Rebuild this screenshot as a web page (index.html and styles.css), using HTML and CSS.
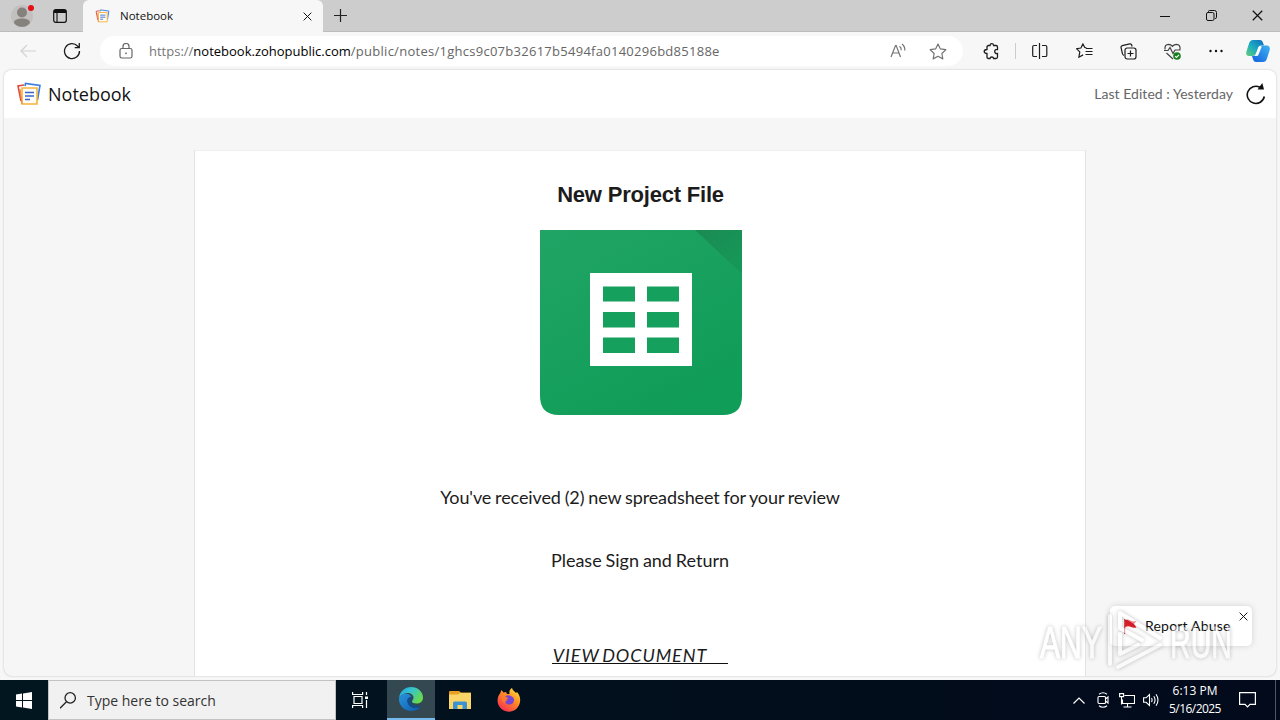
FILE: index.html
```html
<!DOCTYPE html>
<html lang="en">
<head>
    <meta charset="UTF-8">
    <meta name="viewport" content="width=device-width, initial-scale=1.0">
    <title>Notebook</title>
    <link rel="stylesheet" href="styles.css">
</head>
<body>
    <svg class="defs" width="0" height="0">
        <symbol id="notebook" viewBox="0 0 24 24">
            <path d="M4 19 1 4l6-1" fill="none" stroke="#e0483e" stroke-width="1.6"/>
            <path d="M8 4 8.500 1.500 23 3.500 20.500 18" fill="none" stroke="#3b7ddd" stroke-width="1.600"/>
            <path d="M5 6h15v16H5z" fill="#fffdf5" stroke="#f3b43c" stroke-width="1.600"/>
            <path d="M3 7l2 15" stroke="#f08a3c" stroke-width="1.200"/>
            <path d="M8 10.500h9M8 14h9M8 17.500h5" stroke="#3566d0" stroke-width="1.500"/>
        </symbol>
        <symbol id="close" viewBox="0 0 10 10">
            <path d="M.7.7l8.600 8.600M9.300.7.7 9.300" fill="none" stroke="currentColor" stroke-width="1.100"/>
        </symbol>
    </svg>

    <div class="tab-strip">
        <div class="profile">
            <svg width="26" height="26" viewBox="0 0 26 26">
                <circle cx="12" cy="13" r="11" fill="#c2c0be"/>
                <circle cx="12" cy="9.500" r="5" fill="#85817d"/>
                <path d="M4 20c0-3 3-4.500 8-4.500s8 1.500 8 4.500c-2 3-5 3.800-8 3.800S6 23 4 20z" fill="#85817d"/>
                <circle cx="21" cy="5" r="3" fill="#e3101a"/>
            </svg>
        </div>
        <div class="tab-actions">
            <svg width="14" height="14" viewBox="0 0 14 14" fill="none" stroke="#111">
                <rect x=".7" y=".7" width="12.600" height="12.600" rx="2" stroke-width="1.200"/>
                <path d="M1 2.500h12" stroke-width="3"/>
                <path d="M4 3v10" stroke-width="1.100"/>
            </svg>
        </div>
        <div class="tab">
            <svg width="15" height="14"><use href="#notebook"/></svg>
            <span class="tab-title">Notebook</span>
            <svg class="tab-close" width="9" height="9"><use href="#close"/></svg>
        </div>
        <div class="new-tab">
            <svg width="14" height="14" viewBox="0 0 14 14"><path d="M6.500 0v13M0 6.500h13" stroke="#222" stroke-width="1.200"/></svg>
        </div>
        <div class="window-buttons">
            <div><svg width="10" height="10" viewBox="0 0 10 10"><path d="M0 5.500h10" stroke="#111"/></svg></div>
            <div><svg width="11" height="11" viewBox="0 0 11 11" fill="none" stroke="#111"><rect x=".5" y="2.500" width="7.500" height="8" rx="1.500"/><path d="M2.500 2V1.500q0-1 1-1H8.500q2 0 2 2v5q0 1-1.500 1"/></svg></div>
            <div><svg width="11" height="11"><use href="#close"/></svg></div>
        </div>
    </div>

    <div class="toolbar">
        <div class="tool disabled">
            <svg width="16" height="14" viewBox="0 0 16 14" fill="none" stroke="#d2d2d2" stroke-width="1.200"><path d="M16 7H1M7 1 1 7l6 6"/></svg>
        </div>
        <div class="tool">
            <svg width="18" height="18" viewBox="0 0 18 18" fill="none" stroke="#1d1d1d" stroke-width="1.300"><path d="M16.500 9A7.500 7.500 0 1 1 14.500 4L16 5.500M16.300 1v4.700h-4.600"/></svg>
        </div>
        <div class="address">
            <svg class="lock" width="14" height="17" viewBox="0 0 14 17" fill="none" stroke="#666" stroke-width="1.200"><rect x="1" y="5.500" width="12" height="9.500" rx="1.800"/><path d="M4 5.500V3.500a3 3 0 0 1 6 0v2"/><circle cx="7" cy="10.300" r=".9" fill="#666" stroke="none"/></svg>
            <div class="url">https://<b>notebook.zohopublic.com</b><span class="path">/public/notes/1ghcs9c07b32617b5494fa0140296bd85188e</span></div>
            <svg class="read" width="17" height="16" viewBox="0 0 17 16" fill="none" stroke="#747474" stroke-width="1.200"><path d="M1 14 5.500 2.500h.7L10.500 14M2.700 10h6.200M9.500 3.200q2 1.500 1.700 4M12 1q3.200 2.500 2.800 6.500"/></svg>
            <svg class="star" width="18" height="17" viewBox="0 0 18 17" fill="none" stroke="#747474" stroke-width="1.200"><path d="M9 1l2.400 4.900 5.400.8-3.900 3.800.9 5.400L9 13.300l-4.800 2.600.9-5.400L1.200 6.700l5.400-.8z" stroke-linejoin="round"/></svg>
        </div>
        <div class="tool">
            <svg width="16" height="17" viewBox="0 0 16 17" fill="none" stroke="#1d1d1d" stroke-width="1.300"><path d="M5.500 2.500H7q.2-1.800 1.800-1.800t1.800 1.800H13q1.500 0 1.500 1.500v2.500q-2.800-.3-2.800 2t2.800 2V14q0 1.500-1.500 1.500h-2.400q-.2-1.500-1.800-1.500T7 15.500H5.500Q4 15.500 4 14v-3.500Q1.200 10.300 1.200 8.500T4 6.500V4q0-1.500 1.500-1.500z"/></svg>
        </div>
        <div class="separator"></div>
        <div class="tool">
            <svg width="16" height="16" viewBox="0 0 16 16" fill="none" stroke="#1d1d1d" stroke-width="1.200"><path d="M7.500 0v16M5 2.500H2q-1.300 0-1.300 1.300v8.400q0 1.300 1.300 1.300h3M10 2.500h3.500q1.300 0 1.300 1.300v8.400q0 1.300-1.300 1.300H10"/></svg>
        </div>
        <div class="tool">
            <svg width="17" height="16" viewBox="0 0 17 16" fill="none" stroke="#1d1d1d" stroke-width="1.200"><path d="M10.500 4.800 8.800 4.500 6.900 1 4.900 5 .6 5.700l3.200 3.200-.9 5.300 4.200-2.300M10 5.500h6.500M9.500 8.500h7M9.500 11.500h7"/></svg>
        </div>
        <div class="tool">
            <svg width="17" height="17" viewBox="0 0 17 17" fill="none" stroke="#1d1d1d" stroke-width="1.200"><path d="M4 12.300Q2.700 12 2.400 10.500L1 4.500Q.8 3 2.200 2.600L9.800.9Q11.300.7 11.700 2l.4 1.500"/><rect x="5" y="5" width="11" height="11" rx="2.200"/><path d="M10.500 7.500v6M7.500 10.500h6"/></svg>
        </div>
        <div class="tool">
            <svg width="17" height="17" viewBox="0 0 17 17" fill="none" stroke="#444" stroke-width="1.200"><path d="M1 6.500Q.5 1.500 4.500 1.300q2.500 0 4 2 1.500-2 4-2Q16.500 1.500 16 6.500M2.500 10 9 16M0 7.500h4L6 4.500l3 6 2-3.500h5.500"/><circle cx="13" cy="13" r="3.800" fill="#16801c" stroke="none"/><path d="M11.200 13.200l1.300 1.200L15 11.800" stroke="#fff"/></svg>
        </div>
        <div class="tool">
            <svg width="14" height="4" viewBox="0 0 14 4" fill="#111"><circle cx="1.500" cy="2" r="1.200"/><circle cx="7" cy="2" r="1.200"/><circle cx="12.500" cy="2" r="1.200"/></svg>
        </div>
        <div class="copilot">
            <svg width="24" height="22" viewBox="0 0 24 22">
                <defs>
                    <linearGradient id="cop-a" x1="0" y1="1" x2="1" y2="0"><stop offset="0" stop-color="#63cf78"/><stop offset=".5" stop-color="#18a9c4"/><stop offset="1" stop-color="#1268bd"/></linearGradient>
                    <linearGradient id="cop-b" x1="1" y1="0" x2="0" y2="1"><stop offset="0" stop-color="#3fb4f0"/><stop offset="1" stop-color="#145fe0"/></linearGradient>
                </defs>
                <path d="M7 0h7q2 0 2.700 2L18 5.500h-3q-2 0-2.700 2L10 14q-.8 2-3.500 2H3Q-.5 16 .3 12L3 3.500Q4 0 7 0z" fill="url(#cop-a)"/>
                <path d="M17 22h-7q-2 0-2.700-2L6 16h3q2 0 2.700-2l2.300-6.500q.8-2 3-2h4Q24.500 6 23.700 10L21 18.500Q20 22 17 22z" fill="url(#cop-b)"/>
                <path d="M12.800 6.500h3L12 15.700H9z" fill="#fff"/>
            </svg>
        </div>
    </div>

    <div class="page">
        <div class="header">
            <svg width="24" height="24"><use href="#notebook"/></svg>
            <h1>Notebook</h1>
            <span class="edited">Last Edited : Yesterday</span>
            <svg class="reload" width="20" height="22" viewBox="0 0 20 22" fill="none"><path d="M18.300 13.500A8.600 8.600 0 1 1 14 4.300" stroke="#111" stroke-width="1.600"/><path d="M11.500 6.500 16.300 0l1.700 6.500z" fill="#111"/></svg>
        </div>
        <div class="note">
            <h2>New Project File</h2>
            <svg class="sheet" width="202" height="185" viewBox="0 0 202 185">
                <defs>
                    <linearGradient id="green" x1="0" y1="0" x2=".6" y2="1"><stop offset="0" stop-color="#21a465"/><stop offset="1" stop-color="#109d58"/></linearGradient>
                    <linearGradient id="fold" x1="0" y1="0" x2="1" y2="1"><stop offset="0" stop-color="#1b8a54"/><stop offset="1" stop-color="#159a58"/></linearGradient>
                </defs>
                <path d="M0 0h202v166q0 19-19 19H19q-19 0-19-19z" fill="url(#green)"/>
                <path d="M155 0h47v44z" fill="url(#fold)"/>
                <path d="M50 43h102v93H50z" fill="#fff"/>
                <path d="M63 56.500h32v15H63zM107 56.500h32v15h-32zM63 82h32v15.500H63zM107 82h32v15.500h-32zM63 107.500h32V123H63zM107 107.500h32V123h-32z" fill="#16a05d"/>
            </svg>
            <p class="message">You've received (2) new spreadsheet for your review</p>
            <p class="sign">Please Sign and Return</p>
            <p class="view"><u>VIEW DOCUMENT</u></p>
        </div>
        <div class="report">
            <svg width="13" height="15" viewBox="0 0 13 15"><path d="M.7 0v15" stroke="#c93030"/><path d="M1 1q3-1 5.500.5T12.500 2L10 5l2.500 3.500q-3 .8-5.500-.5T1 8z" fill="#df2029"/></svg>
            <span>Report Abuse</span>
            <svg class="report-close" width="9" height="9"><use href="#close"/></svg>
        </div>
    </div>

    <div class="taskbar">
        <div class="start">
            <svg width="16" height="17" viewBox="0 0 16 17" fill="#fff"><path d="M0 2.500 6 1.600V8H0zM7 1.500 16 0v8H7zM0 9h6v6.400l-6-.9zM7 9h9v8l-9-1.500z"/></svg>
        </div>
        <div class="search">
            <svg width="17" height="17" viewBox="0 0 17 17" fill="none" stroke="#222" stroke-width="1.300"><circle cx="10.200" cy="5.900" r="5.200"/><path d="M6.500 9.700 0 16.200"/></svg>
            <span>Type here to search</span>
        </div>
        <div class="task task-view">
            <svg width="17" height="16" viewBox="0 0 17 16" fill="none" stroke="#fff" stroke-width="1.200"><path d="M.6 0v2.500h10V0M.6 16v-2.500h10V16M2 4.500h8v7H2zM14.500 0v3M14.500 8v8"/><path d="M13 4.500h3v2.500h-3z" fill="#fff" stroke="none"/></svg>
        </div>
        <div class="task active">
            <svg width="24" height="24" viewBox="0 0 24 24">
                <defs>
                    <linearGradient id="edge-a" x1="0" y1="0" x2="1" y2=".5"><stop offset="0" stop-color="#279ee0"/><stop offset=".5" stop-color="#35c5cf"/><stop offset="1" stop-color="#67d94f"/></linearGradient>
                    <linearGradient id="edge-b" x1="0" y1="0" x2="1" y2="1"><stop offset="0" stop-color="#2795df"/><stop offset="1" stop-color="#105bab"/></linearGradient>
                </defs>
                <path d="M0 11C1 4 6 0 12 0c7 0 12 5 12 10.500 0 4-3 6-6.500 6-3 0-4.500-1-4.500-2s1.500-1.500 1.500-4C14.500 7 10 5 6 6.500 3 7.500 1 9 0 11z" fill="url(#edge-a)"/>
                <path d="M0 11C2 7 6 6 9 7c2 .7 3 2 3.500 3C9 10 8 12.500 8.500 15c.8 4 5 6.500 9 6 1.500-.2 3-.8 4-1.500-2 3-5.500 4.500-9.500 4.500C5 24-.8 18 0 11z" fill="url(#edge-b)"/>
                <path d="M12.500 10C9 10 8 12.500 8.500 15c.8 4 5 6.500 9 6 1.500-.2 3-.8 4-1.500l.8-1.200c-4 1.500-9.300.2-10.300-3.300-.4-2 .5-3 .5-5z" fill="#124c8c"/>
            </svg>
        </div>
        <div class="task explorer">
            <svg width="22" height="19" viewBox="0 0 22 19"><path d="M0 1q0-1 1-1h9l2 1.500h10v5H0z" fill="#e79e25"/><path d="M0 3.500h9L11 2h11v16H0z" fill="#fbd567"/><path d="M4 18v-6q0-1.500 1.500-1.500h11Q18 10.500 18 12v6h-4.500v-4h-5v4z" fill="#3d93d0"/></svg>
        </div>
        <div class="task">
            <svg width="24" height="24" viewBox="0 0 24 24">
                <defs><linearGradient id="fox" x1=".9" y1="0" x2=".2" y2="1"><stop offset="0" stop-color="#ffe83a"/><stop offset=".45" stop-color="#ff8a25"/><stop offset="1" stop-color="#f42a55"/></linearGradient></defs>
                <path d="M3 5.500 4.500 2l2 2.500L9 4l1 2h2.500C12 3 13 1 15 0c.5 2.500 2.500 3 4 5l1-1c3 3.500 3.500 7 3 10-1 6-6 9.800-11 9.800S1 20 .6 13.500C.4 10 1.300 7.500 3 5.500z" fill="url(#fox)"/>
                <path d="M8 8.500q3-2 6-.5 3.500 1.500 3 4.500-.7 3.800-4.500 4T7.500 13q1.500.5 3-.8L8 11z" fill="#7745d3"/>
                <path d="M5 8q2-1 3.500.5L11 10q0 1.500-2.500 2-1 2 .8 3.500Q6 15 5 12z" fill="#ff7a2b"/>
            </svg>
        </div>
        <div class="tray">
            <div class="tray-icon"><svg width="12" height="7" viewBox="0 0 12 7" fill="none" stroke="#fff" stroke-width="1.200"><path d="M.5 6.500 6 1l5.500 5.500"/></svg></div>
            <div class="tray-icon"><svg width="12" height="16" viewBox="0 0 12 16" fill="none" stroke="#fff" stroke-width="1.100"><rect x="1" y="4.500" width="7.500" height="7" rx="1"/><path d="M8.500 7 11 5v6L8.500 9M2 2.200q4-3 8 0M2 13.800q4 3 8 0"/></svg></div>
            <div class="tray-icon"><svg width="16" height="15" viewBox="0 0 16 15" fill="none" stroke="#fff" stroke-width="1.100"><path d="M5.500 2.500h10v8h-12v-4M8.500 10.500v3.500M4.500 14h8M.6.600h4v3h-4zM2.500 3.600v8"/></svg></div>
            <div class="tray-icon"><svg width="17" height="14" viewBox="0 0 17 14" fill="none" stroke="#fff" stroke-width="1.100"><path d="M.6 4.800h2.500L6.500 1.500v11L3.100 9.300H.6zM8.500 5q1.200 2 0 4M10.800 3.200q2.500 3.800 0 7.600M13 1.300q4 5.700 0 11.400"/></svg></div>
            <div class="clock"><span class="time">6:13 PM</span><span class="date">5/16/2025</span></div>
            <div class="notify"><svg width="17" height="16" viewBox="0 0 17 16" fill="none" stroke="#fff" stroke-width="1.200"><path d="M.6.600h15.800v11.800H11l-2.500 2.500L6 12.400H.6z"/></svg></div>
            <div class="desktop"></div>
        </div>
    </div>

    <svg class="watermark" width="200" height="70" viewBox="0 0 200 70">
        <g class="watermark-text">
            <text x="4" y="50" textLength="62" lengthAdjust="spacingAndGlyphs">ANY</text>
            <text x="134" y="50" textLength="62" lengthAdjust="spacingAndGlyphs">RUN</text>
        </g>
        <path d="M74 8v48M84 20V5l40 25M84 26v20l18-9M82 59l42-22M84 20l22 12" fill="none" stroke="#fff" stroke-width="4" stroke-linejoin="round" stroke-linecap="round"/>
    </svg>
</body>
</html>
```
FILE: styles.css
```css
* {
    box-sizing: border-box;
}
body {
    display: flex;
    flex-direction: column;
    width: 1280px;
    height: 720px;
    margin: 0;
    overflow: hidden;
    font-family: "Open Sans", "Noto Sans", sans-serif;
    background: #f7f7f8;
    color: #111;
}
svg {
    display: block;
    flex-shrink: 0;
}
.defs {
    position: absolute;
}

/* Browser tabs */
.tab-strip {
    display: flex;
    height: 32px;
    background: #cdcdcd;
    border-bottom: 1px solid #bcbcbc;
}
.profile {
    width: 44px;
    padding: 3px 0 0 10px;
}
.tab-actions {
    width: 39px;
    padding: 9px 0 0 9px;
}
.tab {
    display: flex;
    align-items: center;
    width: 240px;
    height: 32px;
    padding: 0 11px 0 12px;
    border-radius: 6px 6px 0 0;
    background: #f7f7f7;
}
.tab-title {
    margin: -1px 0 0 10px;
    font-size: 11.5px;
}
.tab-close {
    margin-left: auto;
}
.new-tab {
    padding: 9px 11px;
}
.window-buttons {
    display: flex;
    margin-left: auto;
}
.window-buttons div {
    display: flex;
    align-items: center;
    justify-content: center;
    width: 46px;
}

/* Address row */
.toolbar {
    display: flex;
    align-items: center;
    height: 38px;
    padding-left: 6px;
    background: #f7f7f7;
}
.tool {
    display: flex;
    justify-content: center;
    width: 44px;
}
.address {
    display: flex;
    align-items: center;
    width: 863px;
    height: 30px;
    margin: 0 6px;
    padding: 0 16px 0 19px;
    border-radius: 15px;
    background: #fff;
}
.url {
    margin-left: 16px;
    font-size: 13px;
    color: #767676;
    white-space: nowrap;
}
.url b {
    font-weight: 400;
    color: #000;
}
.path {
    color: #666;
    letter-spacing: 0.27px;
}
.read {
    margin-left: auto;
}
.star {
    margin-left: 22px;
}
.separator {
    width: 1px;
    height: 16px;
    margin: 0 2px;
    background: #ccc;
}
.copilot {
    padding-left: 8px;
}

/* Notebook page */
.page {
    position: relative;
    width: 1272px;
    height: 606px;
    margin: 0 4px;
    overflow: hidden;
    border-radius: 8px;
    background: #f6f6f6;
    box-shadow: 0 0 2px #b5b5b8;
    font-family: Lato, sans-serif;
}
.header {
    display: flex;
    align-items: center;
    height: 48px;
    padding: 0 10px 0 13px;
    background: #fff;
}
.header h1 {
    margin: 0 0 0 7px;
    font: 400 18px "Open Sans", "Noto Sans", sans-serif;
}
.edited {
    margin: -2px 0 0 auto;
    font-size: 14px;
    letter-spacing: 0.04px;
    color: #666;
}
.reload {
    margin-left: 13px;
}
.note {
    width: 892px;
    height: 540px;
    margin: 32px auto 0;
    padding-top: 31px;
    border: 1px solid #e2e2e2;
    border-top-color: #f0f0f0;
    background: #fff;
    text-align: center;
    font-size: 18px;
    line-height: 24px;
    color: #1c1c1c;
}
.note h2 {
    margin: 0;
    padding-left: 1px;
    font: 700 22px/25px "Liberation Sans", Arial, sans-serif;
    letter-spacing: -0.2px;
}
.sheet {
    margin: 23px 0 0 345px;
}
.note p {
    margin: 0;
}
.note .message {
    margin-top: 70px;
    letter-spacing: -0.1px;
    word-spacing: -0.7px;
}
.note .sign {
    margin-top: 39px;
    word-spacing: -0.7px;
}
.note .view {
    margin-top: 71px;
    font-style: italic;
}
.view u {
    text-decoration: none;
    display: inline-block;
    height: 21px;
    padding: 0 21px 0 1px;
    border-bottom: 1px solid #111;
    letter-spacing: 0.93px;
    word-spacing: -2px;
}
.report {
    position: absolute;
    left: 1106px;
    top: 536px;
    display: flex;
    align-items: center;
    width: 142px;
    height: 40px;
    padding-left: 14px;
    border-radius: 5px;
    background: #fff;
    box-shadow: 0 0 6px rgba(0, 0, 0, 0.15);
    font-size: 14px;
}
.report span {
    margin: -2px 0 0 8px;
    letter-spacing: 0.2px;
}
.report-close {
    position: absolute;
    top: 6px;
    right: 4px;
}

/* Windows taskbar */
.taskbar {
    display: flex;
    height: 40px;
    margin-top: 4px;
    background: linear-gradient(90deg, #02161f, #020f1d 50%, #020a1b);
    color: #fff;
}
.start {
    display: flex;
    align-items: center;
    justify-content: center;
    width: 48px;
}
.search {
    display: flex;
    align-items: center;
    width: 288px;
    padding-left: 11px;
    border: 1px solid #c2c2c2;
    background: #f1f1f1;
    color: #333;
    font-size: 14px;
}
.search span {
    margin-left: 10px;
}
.task {
    display: flex;
    align-items: center;
    justify-content: center;
    width: 48px;
}
.task-view {
    margin-right: 3px;
}
.active {
    background: #334850;
    border-bottom: 2px solid #76b9ed;
}
.explorer {
    margin: 0 1px;
}
.tray {
    display: flex;
    align-items: center;
    margin-left: auto;
}
.tray-icon {
    display: flex;
    justify-content: center;
    width: 24px;
}
.clock {
    display: flex;
    flex-direction: column;
    align-items: center;
    width: 64px;
    font-size: 12px;
    line-height: 18px;
}
.date {
    letter-spacing: -0.55px;
}
.notify {
    display: flex;
    justify-content: center;
    width: 40px;
}
.desktop {
    width: 5px;
    height: 40px;
    margin-left: 8px;
    border-left: 1px solid #4d5663;
}

.watermark {
    position: absolute;
    left: 1036px;
    top: 608px;
    opacity: 0.45;
    filter: drop-shadow(0 0 2px rgba(0, 0, 0, 0.55));
}
.watermark-text {
    fill: #fff;
    font: 400 45px "Liberation Sans", sans-serif;
    stroke: #fff;
}
```
